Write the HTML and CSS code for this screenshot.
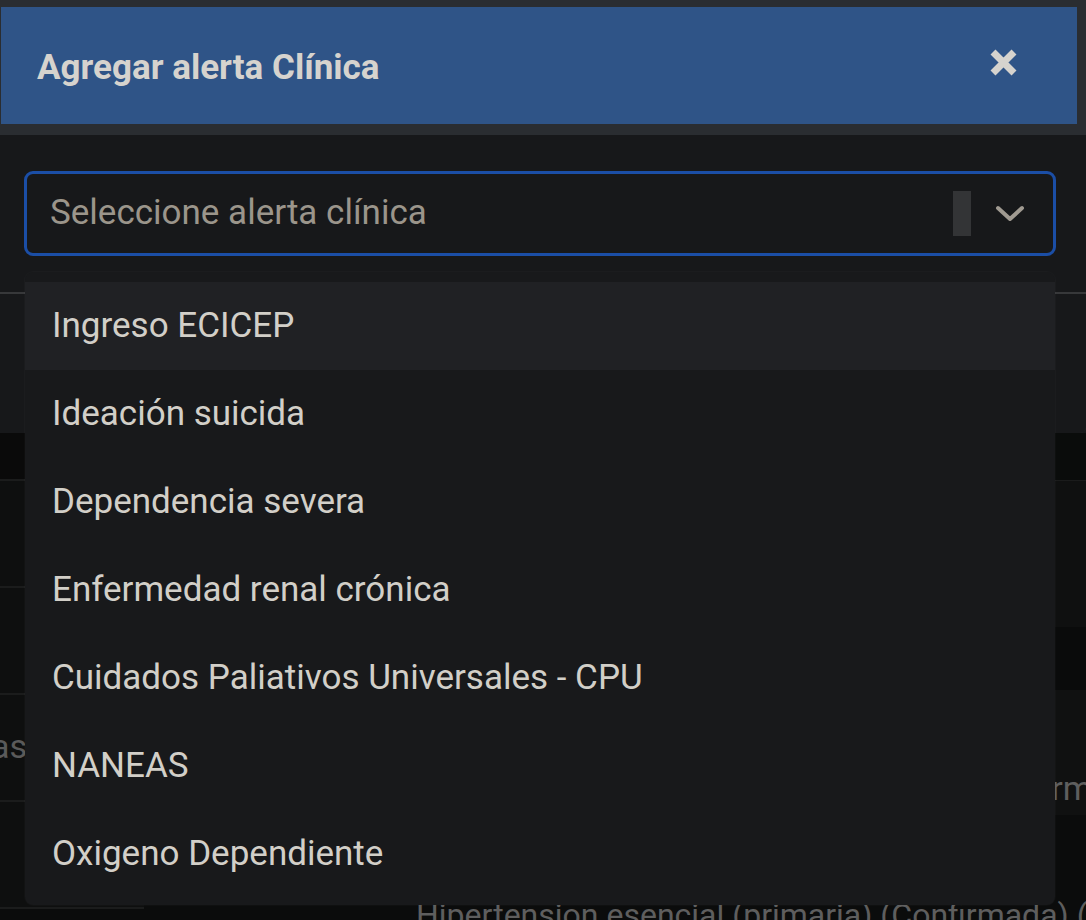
FILE: index.html
```html
<!DOCTYPE html>
<html lang="es">
<head>
<meta charset="utf-8">
<title>Agregar alerta Clínica</title>
<link rel="stylesheet" href="styles.css">
</head>
<body>
<div class="page">
  <div class="page-head"></div>
  <div class="page-table">
    <div class="side-col">
      <div class="side-row side-head"></div>
      <div class="side-row"></div>
      <div class="side-row"></div>
      <div class="side-row"><span class="side-text">Alertas</span></div>
      <div class="side-row"></div>
    </div>
    <div class="main-col">
      <div class="main-row main-head"></div>
      <div class="main-row r-b"></div>
      <div class="main-row r-c"></div>
      <div class="main-row r-d"><span class="cell-text conf">Confirmada</span></div>
      <div class="main-row r-e"><span class="cell-text diag">Hipertension esencial (primaria) (Confirmada) (Activa)</span></div>
    </div>
  </div>
</div>

<div class="modal">
  <div class="modal-header">
    <h2 class="modal-title">Agregar alerta Clínica</h2>
    <button class="close-btn" type="button" aria-label="Cerrar">
      <svg width="27" height="27" viewBox="0 0 27 27"><path d="M3 3 L24 24 M24 3 L3 24" stroke="#d6d3ce" stroke-width="7" fill="none"/></svg>
    </button>
  </div>
  <div class="modal-body">
    <div class="select">
      <span class="placeholder">Seleccione alerta clínica</span>
      <span class="indicators">
        <span class="sep"></span>
        <svg class="chev" width="30" height="20" viewBox="0 0 30 20"><path d="M3 4 L15 15 L27 4" stroke="#a09a91" stroke-width="4" fill="none" stroke-linecap="round" stroke-linejoin="round"/></svg>
      </span>
    </div>
    <div class="divider"></div>
  </div>
</div>

<ul class="menu">
  <li class="opt active">Ingreso ECICEP</li>
  <li class="opt">Ideación suicida</li>
  <li class="opt">Dependencia severa</li>
  <li class="opt">Enfermedad renal crónica</li>
  <li class="opt">Cuidados Paliativos Universales - CPU</li>
  <li class="opt">NANEAS</li>
  <li class="opt">Oxigeno Dependiente</li>
</ul>
</body>
</html>
```

FILE: styles.css
```css
* { box-sizing: border-box; }
html, body { margin: 0; padding: 0; }
body {
  width: 1086px;
  height: 920px;
  overflow: hidden;
  background: #0b0c0c;
  font-family: Roboto, "Liberation Sans", sans-serif;
  position: relative;
}

/* ---- background page ---- */
.page { width: 1086px; }
.page-head { height: 433px; background: #17181a; }
.page-table { display: flex; }
.side-col { width: 144px; display: flex; flex-direction: column; }
.side-row {
  height: 107px;
  background: #0e0f0f;
  border-bottom: 2px solid #1b1c1c;
  display: flex;
  align-items: center;
  justify-content: flex-end;
  overflow: hidden;
}
.side-head { height: 48px; background: #0a0a0a; }
.side-text {
  color: #5a5a5a;
  font-size: 34px;
  margin-right: 117px;
  margin-bottom: 4px;
  white-space: nowrap;
}
.main-col { flex: 1; display: flex; flex-direction: column; overflow: hidden; }
.main-row { position: relative; overflow: hidden; white-space: nowrap; display: flex; align-items: center; }
.main-head { height: 48px; background: #0a0c0b; border-bottom: 1px solid #1a1b1b; }
.r-b { height: 146px; background: #0f1010; }
.r-c { height: 63px; background: #0a0b0b; }
.r-d { height: 125px; background: #101111; }
.r-e { height: 120px; background: #0b0c0c; align-items: flex-start; }
.cell-text { color: #5e5e5e; font-size: 34px; }
.conf { margin-left: 828px; margin-top: 70px; }
.diag { margin-left: 272px; margin-top: 81px; font-size: 32px; }

/* ---- modal ---- */
.modal {
  position: absolute;
  top: 0;
  left: 0;
  width: 1086px;
  background: #2a2d31;
  padding-top: 7px;
  border-bottom-right-radius: 6px;
}
.modal-header {
  height: 117px;
  margin: 0 9px 11px 1px;
  background: #2f5487;
  display: flex;
  align-items: center;
  justify-content: space-between;
  padding: 4px 60px 0 36px;
}
.modal-title {
  margin: 0;
  color: #d6d3ce;
  font-size: 35px;
  font-weight: 700;
}
.close-btn {
  background: none;
  border: 0;
  padding: 0;
  width: 27px;
  height: 27px;
  display: flex;
  margin-top: -10px;
}
.modal-body {
  height: 298px;
  background: #17181a;
  padding-top: 36px;
  border-bottom-right-radius: 6px;
}
.select {
  margin: 0 30px 0 24px;
  height: 85px;
  border: 3px solid #1b4ea6;
  border-radius: 9px;
  display: flex;
  align-items: center;
  justify-content: space-between;
  padding: 0 28px 0 23px;
}
.placeholder {
  color: #9b958b;
  font-size: 35px;
  margin-top: -2px;
}
.indicators { display: flex; align-items: center; gap: 24px; }
.sep { width: 18px; height: 45px; background: #333436; }
.chev { display: block; }
.divider {
  margin-top: 36px;
  height: 2px;
  background: #37383a;
}

/* ---- dropdown menu ---- */
.menu {
  position: absolute;
  top: 272px;
  left: 25px;
  width: 1030px;
  margin: 0;
  padding: 10px 0 7px;
  list-style: none;
  background: #18191b;
  border-radius: 8px;
  box-shadow: 0 0 0 1px rgba(255,255,255,0.02);
}
.opt {
  height: 88px;
  display: flex;
  align-items: center;
  padding-left: 27px;
  color: #d2cfc8;
  font-size: 35px;
  padding-bottom: 2px;
}
.opt.active { background: #202124; }
```
